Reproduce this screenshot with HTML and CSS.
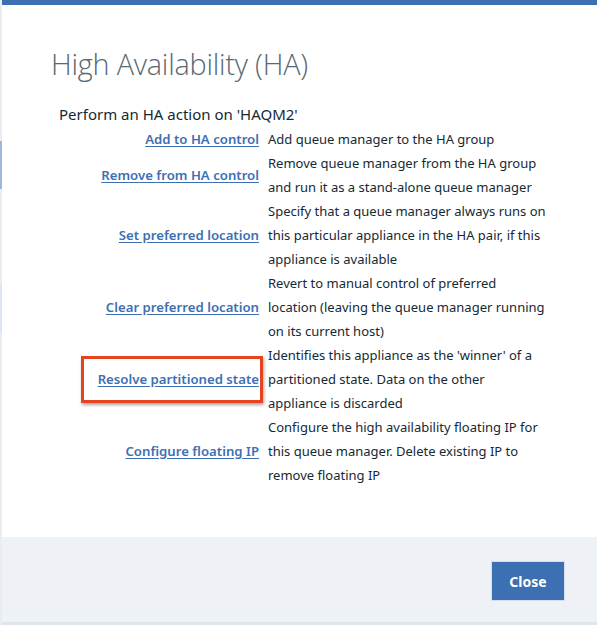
FILE: index.html
```html
<!DOCTYPE html>
<html>
<head>
<meta charset="utf-8">
<link rel="stylesheet" href="styles.css">
</head>
<body>
<div class="page">
  <div class="edge">
    <div class="edge-seg edge-a"></div>
    <div class="edge-seg edge-b"></div>
  </div>
  <div class="dialog">
    <div class="topbar"></div>
    <div class="body">
      <h1 class="title">High Availability (HA)</h1>
      <p class="intro">Perform an HA action on 'HAQM2'</p>
      <div class="actions">
        <div class="link-cell"><a href="#">Add to HA control</a></div>
        <div class="desc">Add queue manager to the HA group</div>

        <div class="link-cell"><a href="#">Remove from HA control</a></div>
        <div class="desc">Remove queue manager from the HA group<br>and run it as a stand-alone queue manager</div>

        <div class="link-cell"><a href="#">Set preferred location</a></div>
        <div class="desc">Specify that a queue manager always runs on<br>this particular appliance in the HA pair, if this<br>appliance is available</div>

        <div class="link-cell"><a href="#">Clear preferred location</a></div>
        <div class="desc">Revert to manual control of preferred<br>location (leaving the queue manager running<br>on its current host)</div>

        <div class="link-cell"><span class="highlight"><a href="#">Resolve partitioned state</a></span></div>
        <div class="desc">Identifies this appliance as the 'winner' of a<br>partitioned state. Data on the other<br>appliance is discarded</div>

        <div class="link-cell"><a href="#">Configure floating IP</a></div>
        <div class="desc">Configure the high availability floating IP for<br>this queue manager. Delete existing IP to<br>remove floating IP</div>
      </div>
    </div>
    <div class="footer">
      <button class="btn">Close</button>
    </div>
  </div>
</div>
</body>
</html>
```

FILE: styles.css
```css
html, body {
  margin: 0;
  padding: 0;
  background: #ffffff;
}
body {
  font-family: "Noto Sans", "Open Sans", sans-serif;
  color: #152935;
}
.page {
  display: flex;
  width: 597px;
  height: 625px;
  overflow: hidden;
}
.edge {
  width: 2px;
  flex: none;
  background: #e9ecf0;
  display: flex;
  flex-direction: column;
  padding-top: 141px;
}
.edge-seg {
  width: 2px;
}
.edge-a {
  height: 48px;
  background: #9fb7d8;
}
.edge-b {
  height: 48px;
  margin-top: 96px;
  background: #dde5f0;
}
.dialog {
  flex: 1;
  display: flex;
  flex-direction: column;
  background: #ffffff;
}
.topbar {
  height: 5px;
  background: #3d70b2;
  flex: none;
}
.body {
  flex: 1;
  padding: 0 0 0 49px;
}
.title {
  margin: 41px 0 0 0;
  font-family: "Open Sans", sans-serif;
  font-weight: 300;
  font-size: 28.8px;
  line-height: 36px;
  color: #5a6872;
  letter-spacing: -0.2px;
}
.intro {
  margin: 22px 0 0 8px;
  font-size: 15px;
  line-height: 20px;
  color: #152935;
}
.actions {
  display: grid;
  grid-template-columns: 208px 300px;
  column-gap: 9px;
  margin-top: 3px;
  font-size: 13px;
  line-height: 24px;
}
.link-cell {
  display: flex;
  align-items: center;
  justify-content: flex-end;
}
.link-cell a {
  color: #3d70b2;
  font-weight: 600;
  font-size: 13.2px;
  text-decoration: underline;
  text-underline-offset: 2px;
}
.highlight {
  display: inline-flex;
  align-items: center;
  box-sizing: border-box;
  height: 47px;
  padding: 0 1px 0 14px;
  margin-right: -4px;
  border: 3px solid #e8431f;
  box-shadow: 1px 2px 3px rgba(0,0,0,0.35);
}
.desc {
  color: #152935;
  white-space: nowrap;
}
.footer {
  height: 88px;
  flex: none;
  background: #eef2f6;
  border-bottom: 3px solid #dfe5ec;
  display: flex;
  justify-content: flex-end;
  align-items: flex-start;
  padding: 24px 32px 0 0;
  box-sizing: border-box;
}
.btn {
  box-sizing: border-box;
  width: 74px;
  height: 40px;
  background: #3d70b2;
  color: #ffffff;
  border: 1px solid #d4dff0;
  font-family: "Noto Sans", sans-serif;
  font-weight: 700;
  font-size: 14px;
  padding: 0;
}
```
